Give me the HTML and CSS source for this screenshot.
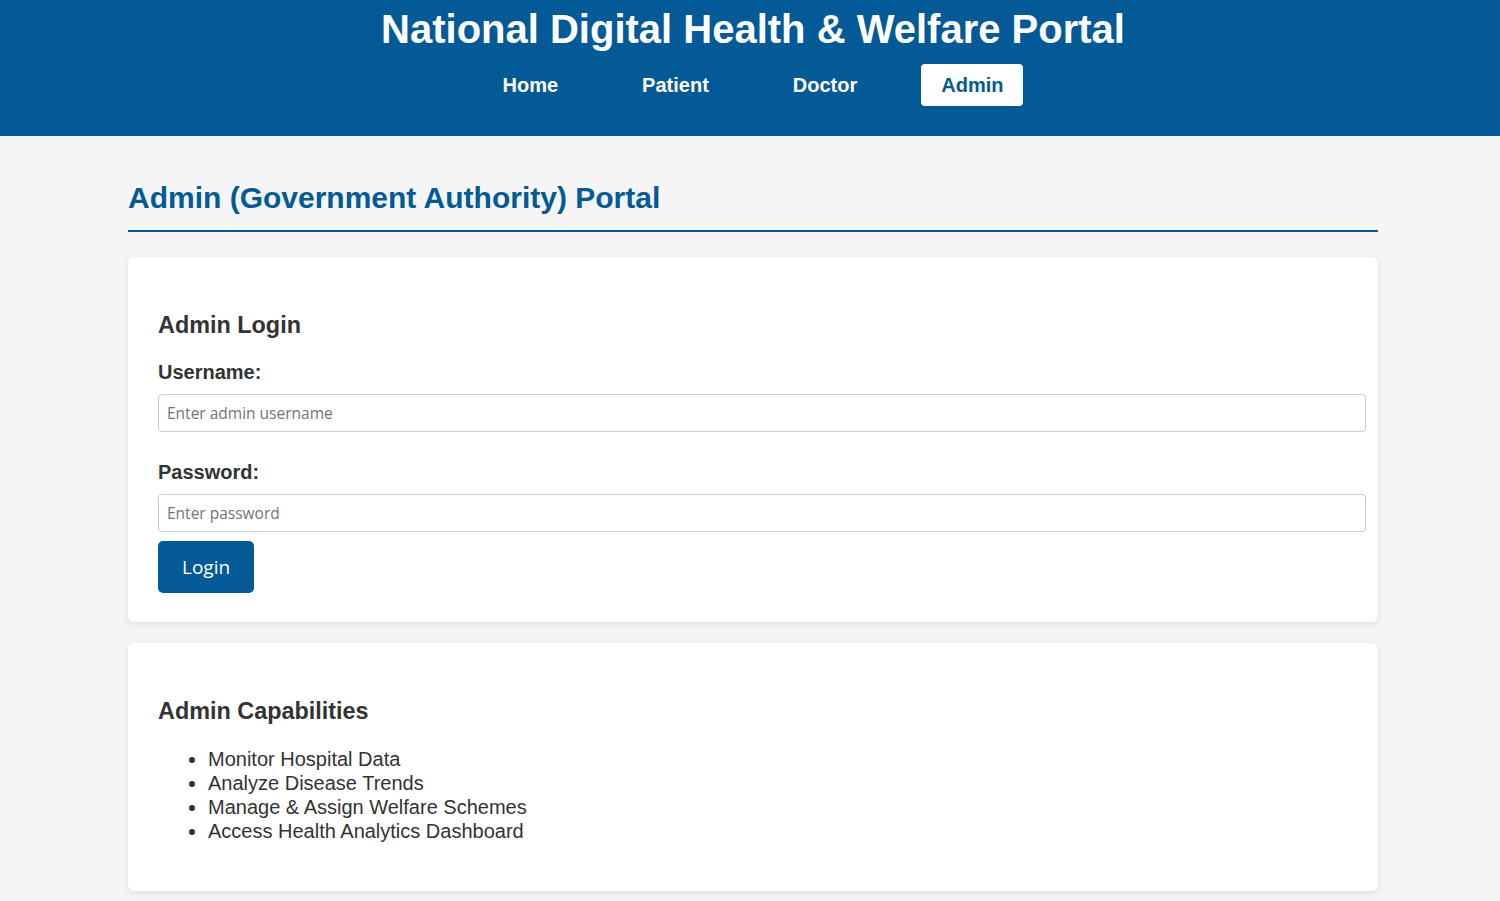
FILE: index.html
```html
<!DOCTYPE html>
<html lang="en">
<head>
<meta charset="utf-8">
<title>Admin Portal</title>
<link rel="stylesheet" href="styles.css">
</head>
<body>
<header class="site-header">
  <div class="header-inner">
    <h1 class="site-title">National Digital Health &amp; Welfare Portal</h1>
    <nav class="nav">
      <a class="nav-link" href="#">Home</a>
      <a class="nav-link" href="#">Patient</a>
      <a class="nav-link" href="#">Doctor</a>
      <a class="nav-link active" href="#">Admin</a>
    </nav>
  </div>
</header>
<div class="content">
  <main class="main">
    <h2 class="page-title">Admin (Government Authority) Portal</h2>
    <section class="card">
      <h3 class="card-title">Admin Login</h3>
      <label class="label" for="u">Username:</label>
      <input class="input" id="u" type="text" placeholder="Enter admin username">
      <label class="label label-gap" for="p">Password:</label>
      <input class="input" id="p" type="password" placeholder="Enter password">
      <button class="btn" type="button">Login</button>
    </section>
    <section class="card">
      <h3 class="card-title">Admin Capabilities</h3>
      <ul class="list">
        <li>Monitor Hospital Data</li>
        <li>Analyze Disease Trends</li>
        <li>Manage &amp; Assign Welfare Schemes</li>
        <li>Access Health Analytics Dashboard</li>
      </ul>
    </section>
  </main>
</div>
</body>
</html>
```

FILE: styles.css
```css
html, body {
  margin: 0;
  padding: 0;
}
body {
  font-family: "Liberation Sans", Arial, sans-serif;
  font-size: 20px;
  color: #333;
  background: #f5f5f5;
}
.site-header {
  background: #035a96;
  color: #fff;
  padding: 6px 0 30px 6px;
}
.header-inner {
  display: flex;
  flex-direction: column;
  align-items: center;
}
.site-title {
  margin: 0 0 12px;
  font-size: 40px;
  font-weight: bold;
  line-height: 46px;
}
.nav {
  display: flex;
  gap: 44px;
}
.nav-link {
  color: #fff;
  text-decoration: none;
  font-weight: bold;
  font-size: 20px;
  line-height: 22px;
  padding: 10px 20px;
  border-radius: 4px;
}
.nav-link.active {
  background: #fff;
  color: #035a96;
}
.content {
  padding-left: 6px;
}
.main {
  max-width: 1250px;
  margin: 0 auto;
  padding-top: 21px;
}
.page-title {
  color: #035a96;
  font-size: 30px;
  margin: 24px 0 25px;
  padding-bottom: 15px;
  border-bottom: 2px solid #035a96;
}
.card {
  background: #fff;
  border-radius: 6px;
  box-shadow: 0 2px 6px rgba(0, 0, 0, 0.1);
  padding: 30px 30px 29px;
  margin-bottom: 21px;
}
.card-title {
  font-size: 23.4px;
  margin: 25px 0 22px;
}
.label {
  display: block;
  font-weight: bold;
}
.label-gap {
  margin-top: 29px;
}
.input {
  display: block;
  width: 100%;
  margin: 10px 0 9px;
  padding: 8px;
  border: 1px solid #ccc;
  border-radius: 4px;
  font-family: "Open Sans", "Noto Sans", sans-serif;
  font-size: 15.5px;
  line-height: 20px;
  color: #333;
  background: #fff;
}
.input::placeholder {
  color: #757575;
}
.btn {
  display: block;
  background: #035a96;
  color: #fff;
  border: none;
  border-radius: 5px;
  padding: 12px 24px;
  font-family: "Open Sans", "Noto Sans", sans-serif;
  font-size: 19px;
  line-height: 28px;
  cursor: pointer;
}
.list {
  margin: 20px 0 19px;
  padding-left: 50px;
  line-height: 24px;
}
```
